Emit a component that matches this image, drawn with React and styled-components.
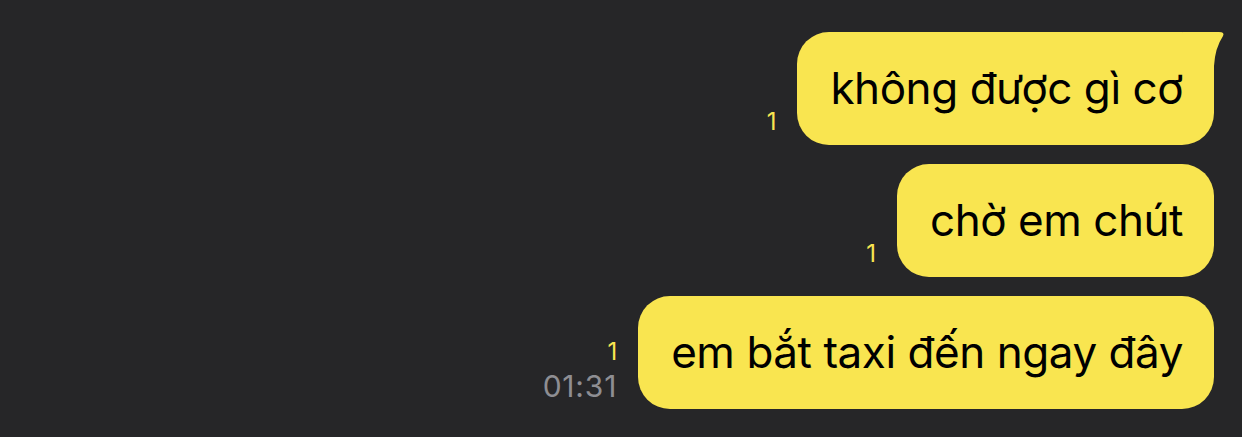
import React from 'react';
import styled, { createGlobalStyle } from 'styled-components';

const GlobalStyle = createGlobalStyle`
  html, body {
    margin: 0;
    padding: 0;
    background: #262628;
  }
  body {
    font-family: Inter, "Noto Sans", "Liberation Sans", sans-serif;
  }
`;

const Chat = styled.div`
  width: 1242px;
  height: 437px;
  box-sizing: border-box;
  padding: 32px 28px 0 0;
  display: flex;
  flex-direction: column;
  align-items: flex-end;
  gap: 19px;
  background: #262628;
  overflow: hidden;
`;

const Row = styled.div`
  display: flex;
  align-items: flex-end;
  gap: 21px;
`;

const Meta = styled.div`
  display: flex;
  flex-direction: column;
  align-items: flex-end;
  margin-bottom: 11px;
`;

const Unread = styled.span`
  color: #f9e550;
  font-size: 24px;
  line-height: 24px;
`;

const Time = styled.span`
  margin-top: 7px;
  margin-bottom: -3px;
  color: #8e8e93;
  font-size: 30px;
  line-height: 30px;
  letter-spacing: 0.8px;
`;

const Bubble = styled.div`
  position: relative;
  height: 113px;
  box-sizing: border-box;
  display: flex;
  align-items: center;
  padding: 0 31px 2px 33px;
  background: #f9e550;
  border-radius: 32px;
  color: #000;
  font-size: 44px;
  letter-spacing: -0.45px;
  white-space: nowrap;
`;

const Tail = styled.svg`
  position: absolute;
  top: 0;
  right: -11px;
`;

const BubbleTail = () => (
  <Tail width="42" height="34" viewBox="0 0 42 34">
    <path d="M0 0 H36 Q42 0 40 4 Q32 16 31 34 H0 Z" fill="#f9e550" />
  </Tail>
);

const messages = [
  { text: 'không được gì cơ', tail: true },
  { text: 'chờ em chút' },
  { text: 'em bắt taxi đến ngay đây', time: '01:31' },
];

export default function App() {
  return (
    <>
      <GlobalStyle />
      <Chat>
        {messages.map((m) => (
          <Row key={m.text}>
            <Meta>
              <Unread>1</Unread>
              {m.time && <Time>{m.time}</Time>}
            </Meta>
            <Bubble>
              {m.tail && <BubbleTail />}
              {m.text}
            </Bubble>
          </Row>
        ))}
      </Chat>
    </>
  );
}
